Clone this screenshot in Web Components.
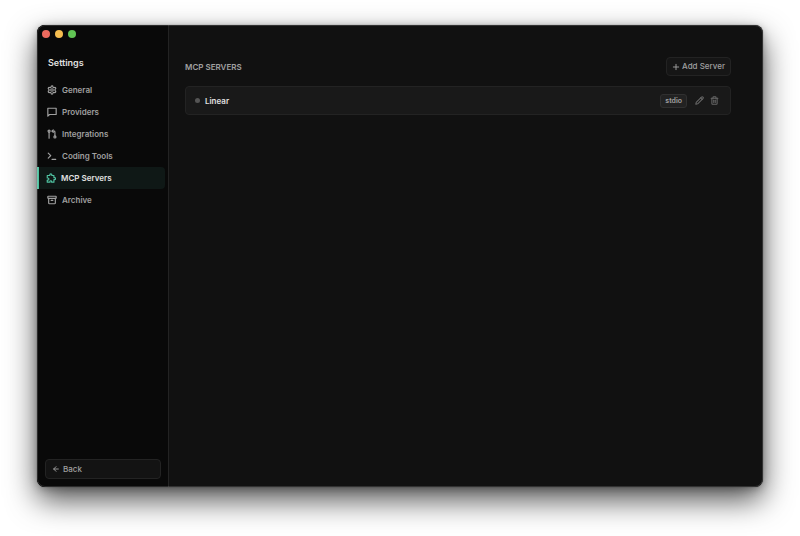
<!DOCTYPE html>
<html lang="en">
<head>
<meta charset="utf-8">
<meta name="viewport" content="width=device-width, initial-scale=1">
<title>Settings</title>
<style>
  * { box-sizing: border-box; }
  body {
    --sidebar: #090909;
    --surface: #111111;
    --card: #191919;
    --line: #232323;
    --text: #e0e0e0;
    --muted: #a0a0a0;
    --dim: #666666;
    --accent: #4fc1a0;
    margin: 0;
    min-height: 100vh;
    padding: 25px 37px 49px;
    display: flex;
    background: #fff;
    color: var(--muted);
    font: 600 8px/12px Inter, "Liberation Sans", sans-serif;
  }
</style>
</head>
<body>
<app-window>
  <settings-sidebar slot="sidebar" heading="Settings">
    <nav-item icon="settings">General</nav-item>
    <nav-item icon="message">Providers</nav-item>
    <nav-item icon="pull-request">Integrations</nav-item>
    <nav-item icon="terminal">Coding Tools</nav-item>
    <nav-item icon="puzzle" active>MCP Servers</nav-item>
    <nav-item icon="archive">Archive</nav-item>
  </settings-sidebar>
  <settings-panel heading="MCP SERVERS" action="Add Server">
    <server-row type="stdio">Linear</server-row>
  </settings-panel>
</app-window>

<script>
// 24x24 outline icons
const ICONS = {
  settings: '<path d="M12.22 2h-.44a2 2 0 0 0-2 2v.18a2 2 0 0 1-1 1.73l-.43.25a2 2 0 0 1-2 0l-.15-.08a2 2 0 0 0-2.73.73l-.22.38a2 2 0 0 0 .73 2.73l.15.1a2 2 0 0 1 1 1.72v.51a2 2 0 0 1-1 1.74l-.15.09a2 2 0 0 0-.73 2.73l.22.38a2 2 0 0 0 2.73.73l.15-.08a2 2 0 0 1 2 0l.43.25a2 2 0 0 1 1 1.73V20a2 2 0 0 0 2 2h.44a2 2 0 0 0 2-2v-.18a2 2 0 0 1 1-1.73l.43-.25a2 2 0 0 1 2 0l.15.08a2 2 0 0 0 2.73-.73l.22-.39a2 2 0 0 0-.73-2.73l-.15-.08a2 2 0 0 1-1-1.74v-.5a2 2 0 0 1 1-1.74l.15-.09a2 2 0 0 0 .73-2.73l-.22-.38a2 2 0 0 0-2.73-.73l-.15.08a2 2 0 0 1-2 0l-.43-.25a2 2 0 0 1-1-1.73V4a2 2 0 0 0-2-2z"/><circle cx="12" cy="12" r="3"/>',
  message: '<path d="M22 3H2v19l4-4h16z"/>',
  'pull-request': '<circle cx="5" cy="5" r="2.5"/><path d="M5 8v14"/><circle cx="19" cy="19" r="2.5"/><path d="M12 5h5a2 2 0 0 1 2 2v9"/><path d="m15 2-3 3 3 3"/>',
  terminal: '<path d="m3 17 6-6-6-6"/><path d="M12 20h9"/>',
  puzzle: '<path d="M3 6h6V4.5a2.5 2.5 0 0 1 5 0V6h5v5h1.5a2.5 2.5 0 0 1 0 5H19v6h-5.5v-1.5a2 2 0 0 0-4 0V22H3v-5h1.5a2.5 2.5 0 0 0 0-5H3z"/>',
  archive: '<rect x="2" y="3" width="20" height="5" rx="1"/><path d="M4 8v11a2 2 0 0 0 2 2h12a2 2 0 0 0 2-2V8"/><path d="M10 13h4"/>',
  back: '<path d="m12 19-7-7 7-7"/><path d="M19 12H5"/>',
  plus: '<path d="M4 12h16"/><path d="M12 4v16"/>',
  pencil: '<path d="M21.2 6.8a1 1 0 0 0-4-4L3.8 16.2a2 2 0 0 0-.5.8L2 21.4a.5.5 0 0 0 .6.6L7 20.7a2 2 0 0 0 .8-.5z"/><path d="m15 5 4 4"/>',
  trash: '<path d="M3 6h18"/><path d="M19 6v14a2 2 0 0 1-2 2H7a2 2 0 0 1-2-2V6"/><path d="M8 6V4a2 2 0 0 1 2-2h4a2 2 0 0 1 2 2v2"/><path d="M10 11v6"/><path d="M14 11v6"/>'
}

function render(el, html) {
  const template = document.createElement("template")
  template.innerHTML = `<style>
    *, :host { box-sizing: border-box; }
    button { font: inherit; color: inherit; cursor: pointer; }
  </style>` + html
  const shadow = el.attachShadow({ mode: "open" })
  shadow.appendChild(template.content.cloneNode(true))
  return shadow
}

class UiIcon extends HTMLElement {
  connectedCallback() {
    if (this.shadowRoot) return
    render(this, `
      <style>
        :host { display: block; flex: none; width: var(--icon-size, 10px); height: var(--icon-size, 10px); }
        svg { display: block; width: 100%; height: 100%; }
      </style>
      <svg viewBox="0 0 24 24" fill="none" stroke="currentColor" stroke-width="2.8"
        stroke-linecap="round" stroke-linejoin="round" aria-hidden="true">${ICONS[this.getAttribute("name")]}</svg>
    `)
  }
}

class AppWindow extends HTMLElement {
  constructor() {
    super()
    render(this, `
      <style>
        :host {
          flex: 1;
          display: flex;
          min-width: 0;
          border-radius: 8px;
          background: var(--surface);
          box-shadow: 0 0 1px rgba(0, 0, 0, .6), 0 2px 8px rgba(0, 0, 0, .25), 0 13px 30px rgba(0, 0, 0, .68);
          overflow: hidden;
          position: relative;
        }
        /* hairline drawn over the panes */
        :host::after {
          content: "";
          position: absolute;
          inset: 0;
          border: 1px solid rgba(255, 255, 255, .14);
          border-radius: inherit;
          pointer-events: none;
        }
      </style>
      <slot name="sidebar"></slot>
      <slot></slot>
    `)
  }
}

class TrafficLights extends HTMLElement {
  constructor() {
    super()
    render(this, `
      <style>
        :host { display: flex; gap: 5px; padding: 5px; }
        button { width: 8px; height: 8px; padding: 0; border: 0; border-radius: 50%; background: #ed6a5e; }
        .min { background: #f5bd4f; }
        .max { background: #61c554; }
      </style>
      <button aria-label="Close"></button>
      <button class="min" aria-label="Minimize"></button>
      <button class="max" aria-label="Zoom"></button>
    `)
  }
}

class SettingsSidebar extends HTMLElement {
  constructor() {
    super()
    render(this, `
      <style>
        :host {
          flex: none;
          width: 132px;
          display: flex;
          flex-direction: column;
          background: var(--sidebar);
          border-right: 1px solid var(--line);
        }
        h1 { margin: 14px 11px 10px; font-size: 9px; line-height: 12px; font-weight: 600; color: var(--text); }
        nav { flex: 1; display: flex; flex-direction: column; padding-right: 3px; }
        .back {
          --icon-size: 8px;
          display: flex;
          align-items: center;
          gap: 3px;
          margin: 8px 7px 8px 8px;
          padding: 3px 6px;
          border: 1px solid var(--line);
          border-radius: 4px;
          background: #131313;
          font-weight: 500;
        }
      </style>
      <traffic-lights></traffic-lights>
      <h1>${this.getAttribute("heading")}</h1>
      <nav><slot></slot></nav>
      <button class="back"><ui-icon name="back"></ui-icon>Back</button>
    `)
  }
}

class NavItem extends HTMLElement {
  constructor() {
    super()
    render(this, `
      <style>
        :host { display: block; }
        a {
          display: flex;
          align-items: center;
          gap: 5px;
          height: 22px;
          padding: 0 10px;
          border-radius: 0 4px 4px 0;
          color: inherit;
          text-decoration: none;
        }
        :host([active]) a {
          padding-left: 7px;
          border-left: 2px solid var(--accent);
          background: #0f1816;
          color: var(--text);
        }
        :host([active]) ui-icon { color: var(--accent); }
      </style>
      <a href="#"><ui-icon name="${this.getAttribute("icon")}"></ui-icon><slot></slot></a>
    `)
  }
}

class SettingsPanel extends HTMLElement {
  constructor() {
    super()
    render(this, `
      <style>
        :host { flex: 1; min-width: 0; padding: 32px 32px 32px 16px; }
        header { display: flex; align-items: center; justify-content: space-between; margin-bottom: 10px; }
        h2 { margin: 0; font-size: 8px; line-height: 12px; font-weight: 600; }
        button {
          --icon-size: 8px;
          display: flex;
          align-items: center;
          gap: 2px;
          padding: 3px 5px;
          border: 1px solid var(--line);
          border-radius: 4px;
          background: #161616;
          font-weight: 500;
          line-height: 11px;
        }
      </style>
      <header>
        <h2>${this.getAttribute("heading")}</h2>
        <button><ui-icon name="plus"></ui-icon>${this.getAttribute("action")}</button>
      </header>
      <slot></slot>
    `)
  }
}

class ServerRow extends HTMLElement {
  constructor() {
    super()
    render(this, `
      <style>
        :host {
          --icon-size: 9px;
          display: flex;
          align-items: center;
          padding: 6px 8px 6px 9px;
          border: 1px solid var(--line);
          border-radius: 4px;
          background: var(--card);
        }
        .dot { width: 5px; height: 5px; margin-right: 5px; border-radius: 50%; background: #555; }
        .name { flex: 1; font-size: 8px; color: var(--text); }
        .type {
          margin-right: 5px;
          padding: 0 4px;
          border: 1px solid #303030;
          border-radius: 3px;
          background: #222;
          font-size: 7px;
        }
        .tool { padding: 3px; border: 0; background: none; color: var(--dim); }
      </style>
      <span class="dot"></span>
      <span class="name"><slot></slot></span>
      <span class="type">${this.getAttribute("type")}</span>
      <button class="tool" aria-label="Edit"><ui-icon name="pencil"></ui-icon></button>
      <button class="tool" aria-label="Delete"><ui-icon name="trash"></ui-icon></button>
    `)
  }
}

customElements.define("ui-icon", UiIcon)
customElements.define("app-window", AppWindow)
customElements.define("traffic-lights", TrafficLights)
customElements.define("settings-sidebar", SettingsSidebar)
customElements.define("nav-item", NavItem)
customElements.define("settings-panel", SettingsPanel)
customElements.define("server-row", ServerRow)
</script>
</body>
</html>
